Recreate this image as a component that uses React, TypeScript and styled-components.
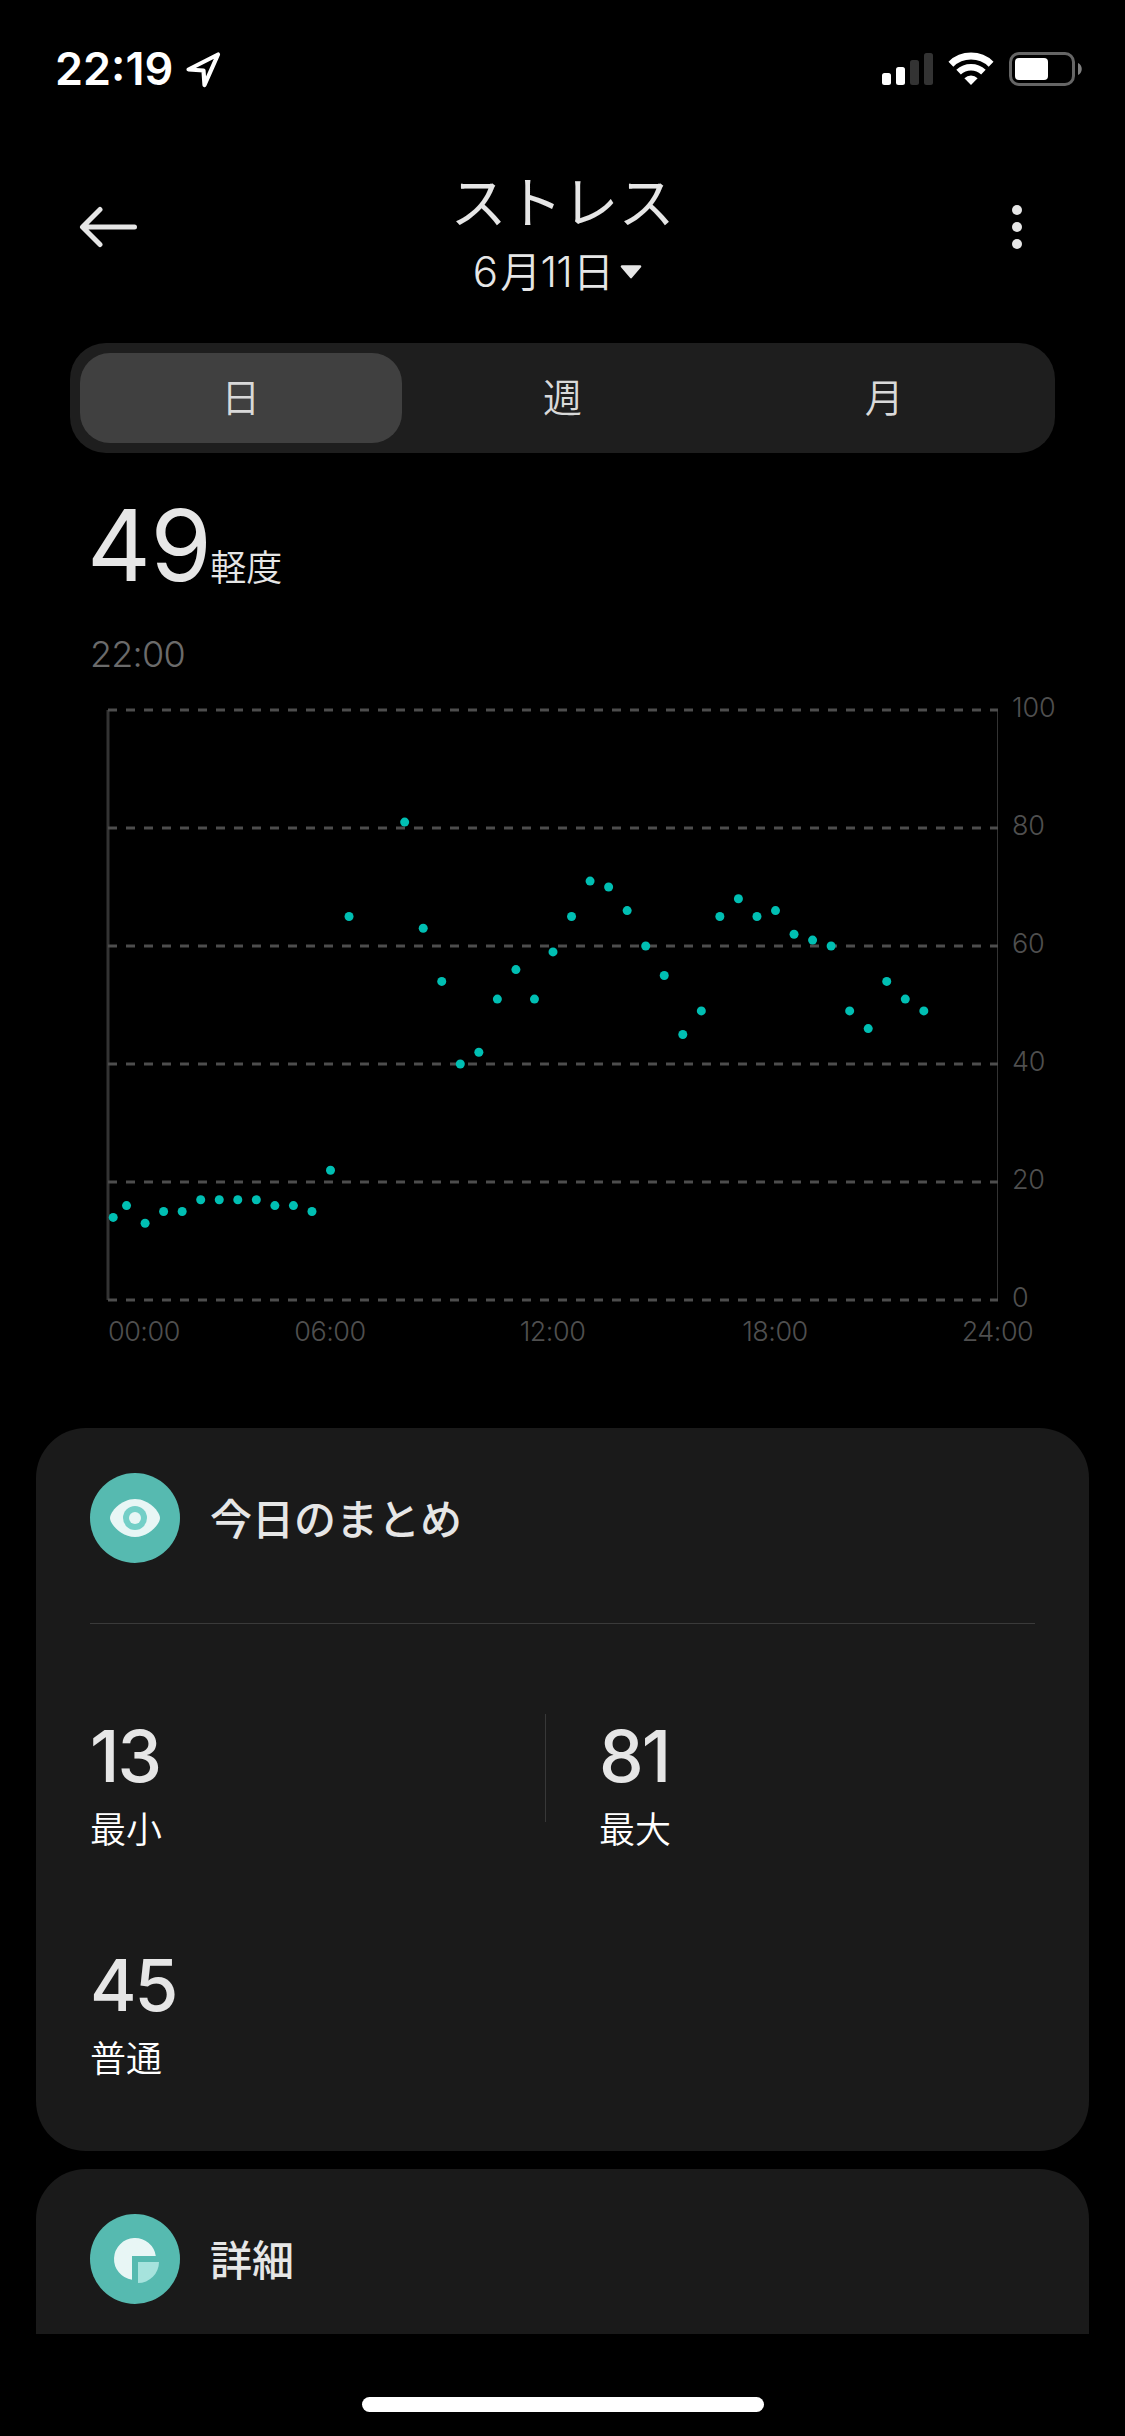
import React from "react";
import styled, { createGlobalStyle } from "styled-components";

const GlobalStyle = createGlobalStyle`
  *, *::before, *::after { box-sizing: border-box; }
  html, body { margin: 0; padding: 0; background: #000; }
  body {
    font-family: Inter, "Noto Sans CJK JP", sans-serif;
    color: #e6e6e6;
    -webkit-font-smoothing: antialiased;
  }
`;

const Screen = styled.main`
  display: flex;
  flex-direction: column;
  width: 1125px;
  height: 2436px;
  overflow: hidden;
  background: #000;
`;

const StatusBar = styled.div`
  display: flex;
  align-items: center;
  justify-content: space-between;
  height: 138px;
  padding: 0 42px 0 55px;
  color: #fff;
`;

const StatusGroup = styled.div<{ $gap: number }>`
  display: flex;
  align-items: center;
  gap: ${(p) => p.$gap}px;
`;

const Clock = styled.span`
  font-size: 45px;
  font-weight: 600;
  line-height: 54px;
`;

const NavBar = styled.header`
  display: flex;
  align-items: center;
  justify-content: space-between;
  height: 178px;
  padding: 0 78px;
`;

const IconButton = styled.button`
  display: flex;
  align-items: center;
  justify-content: center;
  width: 60px;
  height: 60px;
  padding: 0;
  border: 0;
  background: none;
  color: #e6e6e6;
`;

const Heading = styled.div`
  display: flex;
  flex-direction: column;
  align-items: center;
  gap: 10px;
  padding-top: 15px;
`;

const Title = styled.h1`
  margin: 0;
  font-size: 56px;
  font-weight: 400;
  line-height: 64px;
`;

const DatePicker = styled.button`
  display: flex;
  align-items: center;
  gap: 7px;
  padding: 0 10px 0 0;
  border: 0;
  background: none;
  color: #e6e6e6;
  font: 350 41px / 54px Inter, "Noto Sans CJK JP", sans-serif;
  letter-spacing: -0.8px;
`;

const Digits = styled.span<{ $after?: number }>`
  margin-right: ${(p) => p.$after ?? 0}px;
  font-size: 42px;
`;

const Tabs = styled.nav`
  display: grid;
  grid-template-columns: repeat(3, 1fr);
  height: 110px;
  margin: 27px 70px 0;
  padding: 10px;
  border-radius: 36px;
  background: #1e1e1e;
`;

const Tab = styled.button<{ $active?: boolean }>`
  padding: 0;
  border: 0;
  border-radius: 30px;
  background: ${(p) => (p.$active ? "#404040" : "transparent")};
  color: #d9d9d9;
  font: 350 39px / 90px Inter, "Noto Sans CJK JP", sans-serif;
`;

const Reading = styled.section`
  display: flex;
  flex-direction: column;
  gap: 37px;
  padding: 42px 90px 14px;
`;

const ReadingValue = styled.div`
  display: flex;
  align-items: baseline;
  height: 100px;
  margin-left: -3px;
  font-size: 99px;
  font-weight: 400;
  line-height: 100px;
  letter-spacing: -0.5px;
`;

const ReadingLevel = styled.span`
  margin-left: -1px;
  font-size: 36px;
  font-weight: 350;
  letter-spacing: 0;
`;

const ReadingTime = styled.div`
  font-size: 36px;
  font-weight: 300;
  line-height: 44px;
  letter-spacing: -0.8px;
  color: #6b6b6b;
`;

const ChartSvg = styled.svg`
  display: block;
  flex: none;
`;

const AxisLabel = styled.text<{ $tight?: boolean }>`
  fill: #4f4f4f;
  font-size: 27px;
  font-weight: 300;
  letter-spacing: ${(p) => (p.$tight ? "-0.5px" : "-0.2px")};
`;

const Card = styled.section<{ $height: number; $cut?: boolean }>`
  flex: none;
  height: ${(p) => p.$height}px;
  margin: 0 36px;
  padding: 45px 54px 0;
  border-radius: ${(p) => (p.$cut ? "50px 50px 0 0" : "50px")};
  background: #1a1a1a;
`;

const CardStack = styled.div`
  display: flex;
  flex-direction: column;
  gap: 18px;
  margin-top: 78px;
`;

const CardHeader = styled.div`
  display: flex;
  align-items: center;
  gap: 30px;
  height: 90px;
`;

const CardTitle = styled.h2`
  margin: 0;
  padding-top: 3px;
  font-size: 42px;
  font-weight: 500;
  line-height: 60px;
`;

const Divider = styled.hr`
  height: 1px;
  margin: 60px 0 90px;
  border: 0;
  background: #3a3a3a;
`;

const Stats = styled.div`
  display: grid;
  grid-template-columns: 455px 1fr;
  grid-auto-rows: 140px;
  row-gap: 89px;
`;

const Stat = styled.div<{ $indent?: boolean }>`
  display: flex;
  flex-direction: column;
  gap: 8px;
  padding-left: ${(p) => (p.$indent ? 54 : 0)}px;
  background: ${(p) =>
    p.$indent ? "linear-gradient(#383838, #383838) no-repeat 0 0 / 1px 108px" : "none"};
`;

const StatValue = styled.div`
  font-size: 71px;
  font-weight: 500;
  line-height: 84px;
  letter-spacing: -2px;
`;

const StatLabel = styled.div`
  font-size: 36px;
  font-weight: 350;
  line-height: 48px;
  color: #fff;
`;

const HomeBar = styled.div`
  flex: none;
  width: 402px;
  height: 15px;
  margin: 63px auto 0;
  border-radius: 8px;
  background: #fff;
`;

const PLOT = { left: 108, top: 20, width: 890, height: 590 };
const TICKS = [100, 80, 60, 40, 20, 0];

// [hour, stress level]
const SAMPLES: [number, number][] = [
  [0.14, 14], [0.5, 16], [1, 13], [1.5, 15], [2, 15], [2.5, 17], [3, 17],
  [3.5, 17], [4, 17], [4.5, 16], [5, 16], [5.5, 15], [6, 22], [6.5, 65],
  [8, 81], [8.5, 63], [9, 54], [9.5, 40], [10, 42], [10.5, 51], [11, 56],
  [11.5, 51], [12, 59], [12.5, 65], [13, 71], [13.5, 70], [14, 66],
  [14.5, 60], [15, 55], [15.5, 45], [16, 49], [16.5, 65], [17, 68],
  [17.5, 65], [18, 66], [18.5, 62], [19, 61], [19.5, 60], [20, 49],
  [20.5, 46], [21, 54], [21.5, 51], [22, 49],
];

const xOf = (hour: number) => PLOT.left + (hour / 24) * PLOT.width;
const yOf = (level: number) => PLOT.top + (1 - level / 100) * PLOT.height;

function StressChart() {
  const right = PLOT.left + PLOT.width;
  const bottom = PLOT.top + PLOT.height;
  return (
    <ChartSvg width="1125" height="660" viewBox="0 0 1125 660">
      <line x1={PLOT.left} x2={PLOT.left} y1={PLOT.top} y2={bottom} stroke="#333" strokeWidth="3" />
      <line x1={right - 0.5} x2={right - 0.5} y1={PLOT.top} y2={bottom} stroke="#333" strokeWidth="1" />
      {TICKS.map((t) => (
        <g key={t}>
          <line
            x1={PLOT.left}
            x2={right}
            y1={yOf(t)}
            y2={yOf(t)}
            stroke="#4d4d4d"
            strokeWidth="3"
            strokeDasharray="9 9"
          />
          <AxisLabel x={right + 14} y={yOf(t) + 6.5}>{t}</AxisLabel>
        </g>
      ))}
      {[0, 6, 12, 18, 24].map((h) => (
        <AxisLabel
          key={h}
          $tight
          x={h === 0 ? PLOT.left : xOf(h) - 0.5}
          y={bottom + 41}
          textAnchor={h === 0 ? "start" : "middle"}
        >
          {String(h).padStart(2, "0") + ":00"}
        </AxisLabel>
      ))}
      {SAMPLES.map(([h, v]) => (
        <circle key={h} cx={xOf(h)} cy={yOf(v)} r="4.5" fill="#00bfb3" />
      ))}
    </ChartSvg>
  );
}

const LocationIcon = () => (
  <svg width="37" height="37" viewBox="0 0 37 37" fill="none">
    <path
      d="M3.5 18.5 L33 3.5 L19.5 34 L18.5 19.5 Z"
      stroke="#fff"
      strokeWidth="4.2"
      strokeLinejoin="round"
    />
  </svg>
);

const SignalIcon = () => (
  <svg width="51" height="34" viewBox="0 0 51 34">
    <rect x="0" y="21" width="9" height="12" rx="2.5" fill="#fff" />
    <rect x="14" y="15" width="9" height="18" rx="2.5" fill="#fff" />
    <rect x="28" y="8" width="9" height="25" rx="2.5" fill="#333" />
    <rect x="42" y="1" width="9" height="32" rx="2.5" fill="#333" />
  </svg>
);

const WifiIcon = () => (
  <svg width="46" height="34" viewBox="0 0 46 34" fill="none" stroke="#fff">
    <path d="M2.9 12.2 A29 29 0 0 1 43.1 12.2" strokeWidth="7" />
    <path d="M10.6 20.2 A18 18 0 0 1 35.4 20.2" strokeWidth="6.6" />
    <path d="M23 33 L16.4 26.2 A9.5 9.5 0 0 1 29.6 26.2 Z" fill="#fff" stroke="none" />
  </svg>
);

const BatteryIcon = () => (
  <svg width="74" height="34" viewBox="0 0 74 34">
    <rect x="1.5" y="1.5" width="63" height="31" rx="8.5" fill="none" stroke="#666" strokeWidth="3" />
    <rect x="6" y="6" width="33" height="22" rx="4" fill="#fff" />
    <path d="M69 11 C74 13 74 21 69 23 Z" fill="#808080" />
  </svg>
);

const BackIcon = () => (
  <svg width="60" height="42" viewBox="0 0 60 42" fill="none">
    <path
      d="M22 3.5 L4.5 21 L22 38.5 M5 21 H56.5"
      stroke="currentColor"
      strokeWidth="5"
      strokeLinecap="round"
      strokeLinejoin="round"
    />
  </svg>
);

const MoreIcon = () => (
  <svg width="10" height="44" viewBox="0 0 10 44" fill="currentColor">
    <circle cx="5" cy="5" r="5" />
    <circle cx="5" cy="22" r="5" />
    <circle cx="5" cy="39" r="5" />
  </svg>
);

const CaretIcon = () => (
  <svg width="22" height="14" viewBox="0 0 22 14">
    <path d="M2 1.5 H20 L11 12 Z" fill="currentColor" stroke="currentColor" strokeWidth="2.6" strokeLinejoin="round" />
  </svg>
);

const EyeIcon = () => (
  <svg width="90" height="90" viewBox="0 0 90 90">
    <circle cx="45" cy="45" r="45" fill="#56bab0" />
    <path d="M20 45 C20 39 31 26 45 26 C59 26 70 39 70 45 C70 51 59 64 45 64 C31 64 20 51 20 45 Z" fill="#e8f6f5" />
    <circle cx="45" cy="45" r="12" fill="#73cfc7" />
    <circle cx="45" cy="45" r="6" fill="#e8f6f5" />
  </svg>
);

const PieIcon = () => (
  <svg width="90" height="90" viewBox="0 0 90 90">
    <circle cx="45" cy="45" r="45" fill="#56bab0" />
    <path d="M42 42 H65.8 A21 21 0 1 0 42 65.8 Z" fill="#e8f6f5" />
    <path d="M48 48 H69 A21 21 0 0 1 48 69 Z" fill="#a6e3dd" />
  </svg>
);

export default function App() {
  return (
    <Screen lang="ja">
      <GlobalStyle />
      <StatusBar>
        <StatusGroup $gap={12}>
          <Clock>22:19</Clock>
          <LocationIcon />
        </StatusGroup>
        <StatusGroup $gap={15}>
          <SignalIcon />
          <WifiIcon />
          <BatteryIcon />
        </StatusGroup>
      </StatusBar>

      <NavBar>
        <IconButton aria-label="戻る"><BackIcon /></IconButton>
        <Heading>
          <Title>ストレス</Title>
          <DatePicker>
            <span>
              <Digits $after={3}>6</Digits>月<Digits $after={1}>11</Digits>日
            </span>
            <CaretIcon />
          </DatePicker>
        </Heading>
        <IconButton aria-label="メニュー"><MoreIcon /></IconButton>
      </NavBar>

      <Tabs>
        <Tab $active>日</Tab>
        <Tab>週</Tab>
        <Tab>月</Tab>
      </Tabs>

      <Reading>
        <ReadingValue>
          49<ReadingLevel>軽度</ReadingLevel>
        </ReadingValue>
        <ReadingTime>22:00</ReadingTime>
      </Reading>

      <StressChart />

      <CardStack>
        <Card $height={723}>
          <CardHeader>
            <EyeIcon />
            <CardTitle>今日のまとめ</CardTitle>
          </CardHeader>
          <Divider />
          <Stats>
            <Stat>
              <StatValue>13</StatValue>
              <StatLabel>最小</StatLabel>
            </Stat>
            <Stat $indent>
              <StatValue>81</StatValue>
              <StatLabel>最大</StatLabel>
            </Stat>
            <Stat>
              <StatValue>45</StatValue>
              <StatLabel>普通</StatLabel>
            </Stat>
          </Stats>
        </Card>
        <Card $height={165} $cut>
          <CardHeader>
            <PieIcon />
            <CardTitle>詳細</CardTitle>
          </CardHeader>
        </Card>
      </CardStack>
      <HomeBar />
    </Screen>
  );
}
